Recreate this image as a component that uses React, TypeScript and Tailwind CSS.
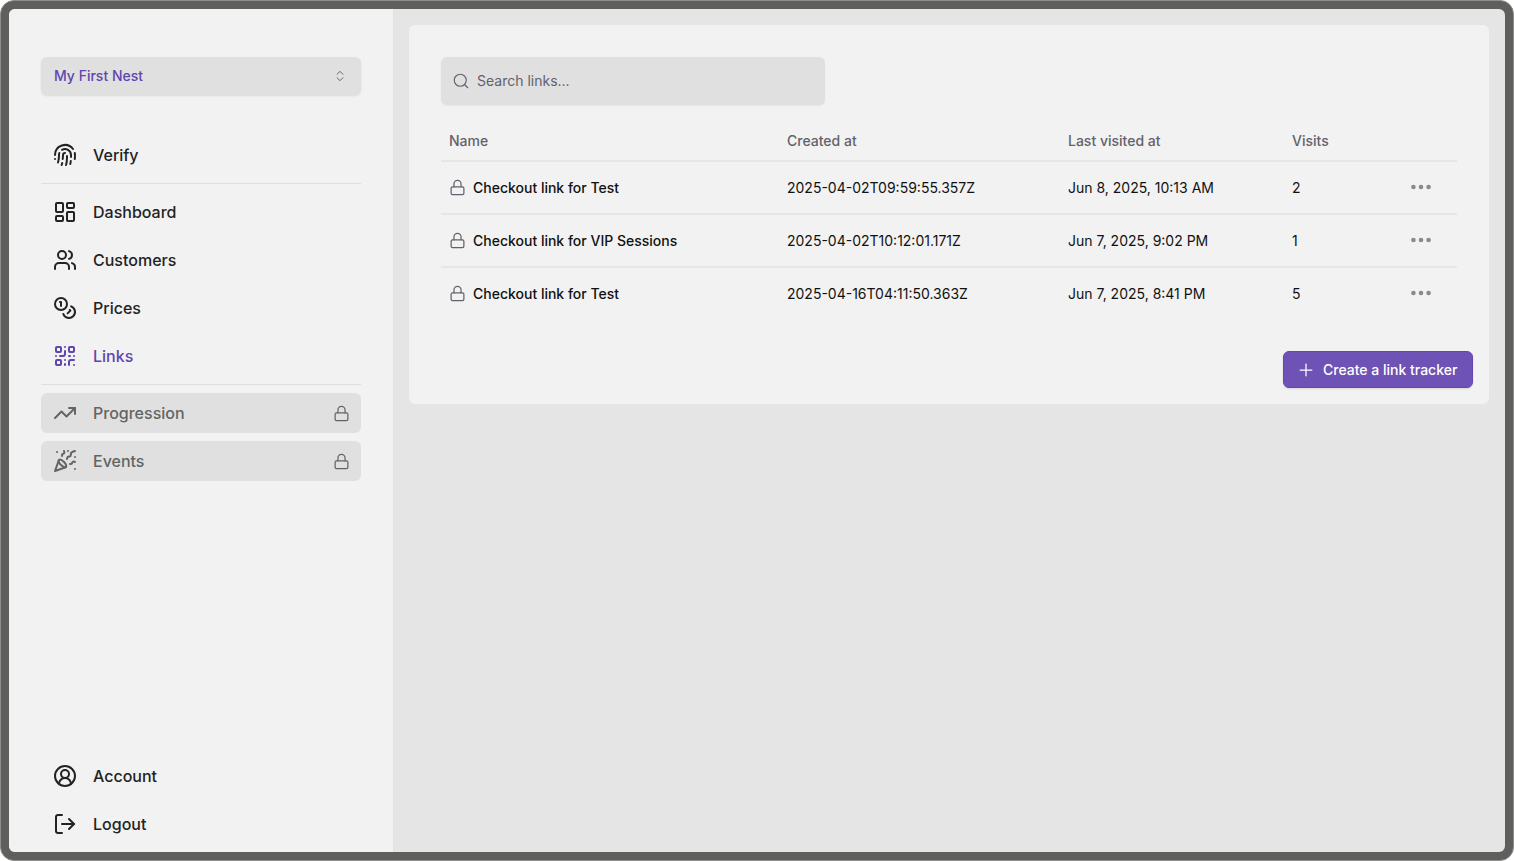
import { ChevronsUpDown, CircleUserRound, Coins, Ellipsis, Fingerprint, LayoutDashboard, Lock, LogOut, PartyPopper, Plus, QrCode, Search, TrendingUp, Users } from "lucide-react"
import type { ComponentType } from "react"

type IconType = ComponentType<{ className?: string; size?: number; strokeWidth?: number }>

type LinkRow = {
  name: string;
  created: string;
  visited: string;
  visits: number;
}

const rows: LinkRow[] = [
  { name: "Checkout link for Test", created: "2025-04-02T09:59:55.357Z", visited: "Jun 8, 2025, 10:13 AM", visits: 2 },
  { name: "Checkout link for VIP Sessions", created: "2025-04-02T10:12:01.171Z", visited: "Jun 7, 2025, 9:02 PM", visits: 1 },
  { name: "Checkout link for Test", created: "2025-04-16T04:11:50.363Z", visited: "Jun 7, 2025, 8:41 PM", visits: 5 },
]

function NavItem({ icon: Icon, label, active }: { icon: IconType; label: string; active?: boolean }) {
  return (
    <div className={`h-12 px-3 flex items-center gap-4 text-base font-medium ${active ? "text-[#5f45b0]" : "text-[#232323]"}`}>
      <Icon size={24} strokeWidth={2} />
      <span>{label}</span>
    </div>
  )
}

function LockedItem({ icon: Icon, label }: { icon: IconType; label: string }) {
  return (
    <div className="h-10 pl-3 pr-[11px] flex items-center gap-4 rounded-md bg-[#e0e0e0] text-base font-medium text-[#646464]">
      <Icon size={24} strokeWidth={2} />
      <span className="flex-1">{label}</span>
      <Lock size={17} strokeWidth={1.75} />
    </div>
  )
}

export default function App() {
  return (
    <div className="h-[861px] bg-white font-['Inter',sans-serif]">
      <div className="h-full rounded-[14px] border border-[#8f8f8d] bg-[#5f5f5d] p-2">
        <div className="h-full flex overflow-hidden rounded-md bg-[#e5e5e5]">
          <aside className="w-[385px] shrink-0 flex flex-col px-8 pt-12 pb-1 bg-[#f2f2f2] border-r border-[#e2e2e2]">
            <div className="h-[38px] mb-9 pl-[13px] pr-[14px] flex items-center justify-between rounded-md bg-[#e0e0e0] shadow-[0_1px_2px_rgba(60,50,110,0.12)] text-sm font-medium text-[#5f45b0]">
              <span>My First Nest</span>
              <ChevronsUpDown size={14} strokeWidth={1.5} className="text-[#555555]" />
            </div>
            <NavItem icon={Fingerprint} label="Verify" />
            <div className="my-1 h-px bg-[#dedede]" />
            <NavItem icon={LayoutDashboard} label="Dashboard" />
            <NavItem icon={Users} label="Customers" />
            <NavItem icon={Coins} label="Prices" />
            <NavItem icon={QrCode} label="Links" active />
            <div className="mt-1 mb-2 h-px bg-[#dedede]" />
            <div className="flex flex-col gap-2">
              <LockedItem icon={TrendingUp} label="Progression" />
              <LockedItem icon={PartyPopper} label="Events" />
            </div>
            <div className="mt-auto">
              <NavItem icon={CircleUserRound} label="Account" />
              <NavItem icon={LogOut} label="Logout" />
            </div>
          </aside>

          <main className="flex-1 p-4 pl-[15px]">
            <div className="rounded-md bg-[#f2f2f2] pt-8 pb-4 px-4">
              <div className="px-4">
                <div className="w-[384px] h-12 pl-[11px] flex items-center gap-[7px] rounded-md bg-[#e0e0e0] shadow-[0_1px_2px_rgba(0,0,0,0.05)] text-sm text-[#62626e]">
                  <Search size={18} strokeWidth={1.5} />
                  <span>Search links...</span>
                </div>

                <div className="mt-[19px] h-[38px] pb-[2px] grid grid-cols-[338px_281px_224px_1fr] items-center px-2 border-b-2 border-[#e6e6e6] text-sm font-medium text-[#62626c]">
                  <span>Name</span>
                  <span>Created at</span>
                  <span>Last visited at</span>
                  <span>Visits</span>
                </div>

                {rows.map((row, i) => (
                  <div key={i} className={`h-[53px] grid grid-cols-[338px_281px_224px_1fr] items-center px-2 border-b-2 text-sm text-[#111111] ${i < rows.length - 1 ? "border-[#e6e6e6]" : "border-transparent"}`}>
                    <div className="flex items-center gap-[7px] font-medium">
                      <Lock size={17} strokeWidth={1.75} className="text-[#62626c]" />
                      <span>{row.name}</span>
                    </div>
                    <span>{row.created}</span>
                    <span>{row.visited}</span>
                    <div className="flex items-center justify-between pr-[15px]">
                      <span>{row.visits}</span>
                      <Ellipsis size={26} strokeWidth={2.25} className="text-[#8a8a8a] mb-px" />
                    </div>
                  </div>
                ))}
              </div>

              <div className="mt-[30px] flex justify-end">
                <div className="h-[37px] w-[190px] pl-3 flex items-center gap-[7px] rounded-md border border-[#6548ad] bg-[#6f52b5] shadow-[0_1px_2px_rgba(0,0,0,0.12)] text-sm font-medium text-white">
                  <Plus size={20} strokeWidth={1.5} />
                  <span>Create a link tracker</span>
                </div>
              </div>
            </div>
          </main>
        </div>
      </div>
    </div>
  )
}
